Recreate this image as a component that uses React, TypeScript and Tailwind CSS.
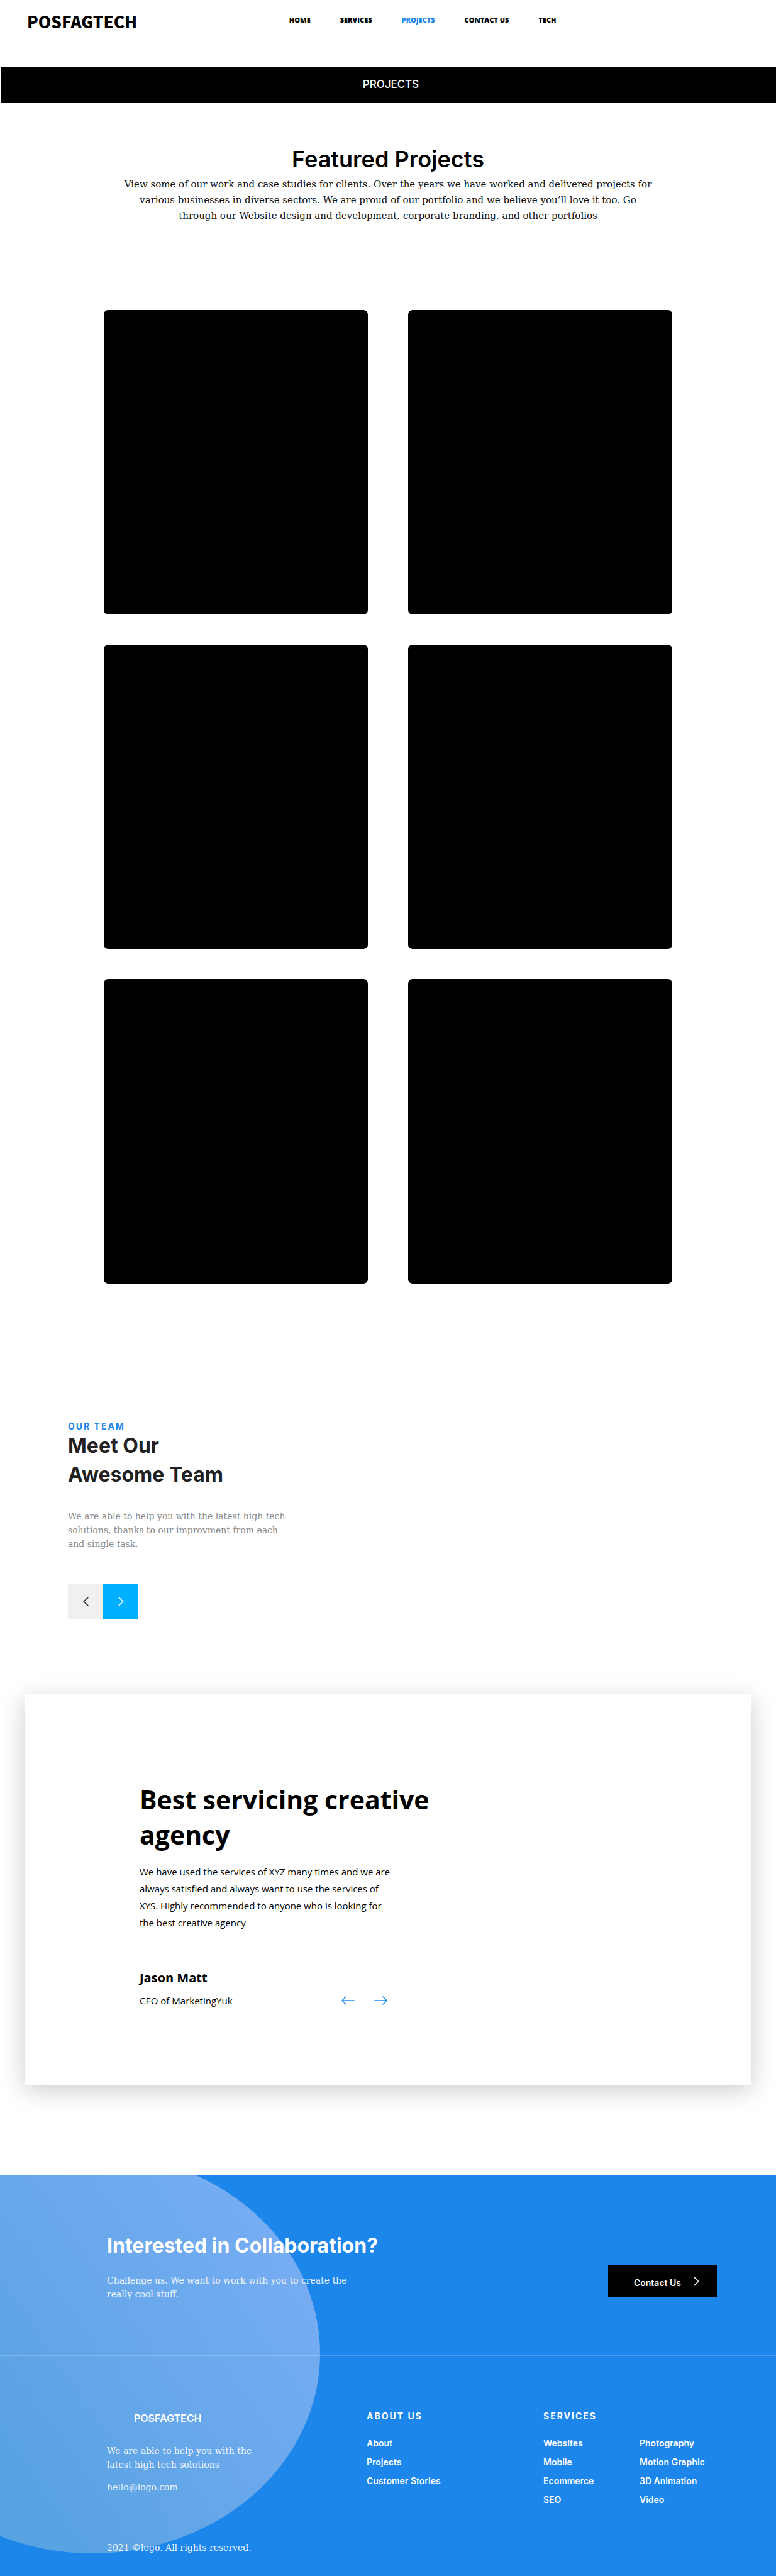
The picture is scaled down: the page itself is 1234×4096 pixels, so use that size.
import React from "react";

const serif = "font-['DejaVu_Serif','Liberation_Serif',serif]";
const sans = "font-['Open_Sans',sans-serif]";

const navItems = [
  { label: "HOME" },
  { label: "SERVICES" },
  { label: "PROJECTS", active: true },
  { label: "CONTACT US" },
  { label: "TECH" },
];

const projects = [1, 2, 3, 4, 5, 6];

function Chevron({ direction }: { direction: "left" | "right" }) {
  return (
    <svg width="9" height="15" viewBox="0 0 9 15" fill="none" stroke="currentColor" strokeWidth="1.6" strokeLinecap="round" aria-hidden="true">
      <path d={direction === "left" ? "M8 1 1.4 7.5 8 14" : "M1 1 7.6 7.5 1 14"} />
    </svg>
  );
}

function Arrow({ direction }: { direction: "left" | "right" }) {
  return (
    <svg width="21" height="14" viewBox="0 0 21 14" fill="none" stroke="currentColor" strokeWidth="1.6" strokeLinecap="round" strokeLinejoin="round" aria-hidden="true">
      <path d={direction === "left" ? "M20 7H1M7 1 1 7l6 6" : "M1 7h19M14 1l6 6-6 6"} />
    </svg>
  );
}

function Header() {
  return (
    <header className={"flex h-[106px] items-start pl-[43px] " + sans}>
      <a href="#" className="mt-4 w-[35%] font-['Noto_Sans_CJK_JP',sans-serif] text-[26px] leading-9 font-black">
        POSFAGTECH
      </a>
      <nav className="mt-6 flex gap-[47px]" aria-label="Main">
        {navItems.map((item) => (
          <a
            key={item.label}
            href="#"
            aria-current={item.active ? "page" : undefined}
            className={"text-[11px] leading-4 font-extrabold whitespace-nowrap " + (item.active ? "text-[#1c86ea]" : "text-black")}
          >
            {item.label}
          </a>
        ))}
      </nav>
    </header>
  );
}

function Featured() {
  return (
    <section className="pt-[65px]">
      <h2 className="text-center text-[36px] leading-[48px] font-semibold">Featured Projects</h2>
      <p className={"mt-1 text-center text-[15px] leading-[25px] text-[#111111] " + serif}>
        View some of our work and case studies for clients. Over the years we have worked and delivered projects for
        <br />
        various businesses in diverse sectors. We are proud of our portfolio and we believe you’ll love it too. Go
        <br />
        through our Website design and development, corporate branding, and other portfolios
      </p>
      <ul className="mx-auto mt-[137px] grid max-w-[904px] grid-cols-2 gap-x-16 gap-y-12">
        {projects.map((project) => (
          <li key={project} className="h-[484px] rounded-[7px] bg-black" />
        ))}
      </ul>
    </section>
  );
}

function Team() {
  return (
    <section className="mt-[219px] px-[108px]">
      <p className="text-[14px] leading-4 font-bold tracking-[2px] text-[#1c86ea]">OUR TEAM</p>
      <h2 className="text-[32px] leading-[46px] font-bold text-[#212121]">
        Meet Our
        <br />
        Awesome Team
      </h2>
      <p className={"mt-8 text-[14px] leading-[22px] text-[#8a8a8a] " + serif}>
        We are able to help you with the latest high tech
        <br />
        solutions, thanks to our improvment from each
        <br />
        and single task.
      </p>
      <div className="mt-[52px] flex">
        <button type="button" aria-label="Previous member" className="flex size-14 items-center justify-center bg-[#f0f0f0] text-[#212121]">
          <Chevron direction="left" />
        </button>
        <button type="button" aria-label="Next member" className="flex size-14 items-center justify-center bg-[#00b0ff] text-white">
          <Chevron direction="right" />
        </button>
      </div>
    </section>
  );
}

function Testimonial() {
  return (
    <section className={"mx-[39px] mt-[120px] bg-white pt-[139px] pb-[123px] pl-[183px] shadow-[0_8px_36px_rgba(0,0,0,0.2)] " + sans}>
      <h2 className="text-[41px] leading-[56px] font-bold">
        Best servicing creative
        <br />
        agency
      </h2>
      <p className="mt-[18px] text-[15px] leading-[27px]">
        We have used the services of XYZ many times and we are
        <br />
        always satisfied and always want to use the services of
        <br />
        XYS. Highly recommended to anyone who is looking for
        <br />
        the best creative agency
      </p>
      <p className="mt-[60px] text-[20px] leading-7 font-bold">Jason Matt</p>
      <div className="mt-[10px] flex max-w-[394px] items-center justify-between">
        <p className="text-[15px] leading-6">CEO of MarketingYuk</p>
        <div className="flex gap-[31px] text-[#1c86ea]">
          <button type="button" aria-label="Previous review">
            <Arrow direction="left" />
          </button>
          <button type="button" aria-label="Next review">
            <Arrow direction="right" />
          </button>
        </div>
      </div>
    </section>
  );
}

function LinkList({ items }: { items: string[] }) {
  return (
    <ul className="mt-[23px] flex flex-col gap-[10px]">
      {items.map((item) => (
        <li key={item} className="text-[14px] leading-5 font-semibold whitespace-nowrap">
          <a href="#">{item}</a>
        </li>
      ))}
    </ul>
  );
}

function Footer() {
  return (
    <footer className="relative mt-[142px] overflow-hidden bg-[#1c86ea] text-white">
      <div className="absolute -top-[34px] -left-[215px] h-[636px] w-[724px] rounded-[50%] bg-[linear-gradient(55deg,#5aa3e3_30%,#78adf3_90%)]" />
      <div className="relative">
        <div className="flex items-start justify-between border-b border-white/20 pt-[93px] pr-[94px] pb-[86px] pl-[170px]">
          <div>
            <h2 className="text-[32px] leading-10 font-bold">Interested in Collaboration?</h2>
            <p className={"mt-6 text-[14px] leading-[22px] text-white/90 " + serif}>
              Challenge us. We want to work with you to create the
              <br />
              really cool stuff.
            </p>
          </div>
          <button type="button" className="mt-[51px] flex h-[51px] w-[173px] items-center justify-end gap-5 bg-black pr-7 text-[14px] font-semibold">
            <span className="pt-1">Contact Us</span>
            <Chevron direction="right" />
          </button>
        </div>
        <div className="grid grid-cols-[413fr_281fr_153fr_217fr] pt-[86px] pb-[34px] pl-[170px]">
          <div>
            <p className="mt-[3px] pl-[43px] text-[16px] leading-5 font-semibold">POSFAGTECH</p>
            <div className={"text-[14px] leading-[22px] text-white/90 " + serif}>
              <p className="mt-[31px]">
                We are able to help you with the
                <br />
                latest high tech solutions
              </p>
              <a href="#" className="mt-[14px] block">
                hello@logo.com
              </a>
              <p className="mt-[74px]">2021 ©logo. All rights reserved.</p>
            </div>
          </div>
          <div>
            <h3 className="text-[14px] leading-5 font-bold tracking-[2px]">ABOUT US</h3>
            <LinkList items={["About", "Projects", "Customer Stories"]} />
          </div>
          <div>
            <h3 className="text-[14px] leading-5 font-bold tracking-[2px]">SERVICES</h3>
            <LinkList items={["Websites", "Mobile", "Ecommerce", "SEO"]} />
          </div>
          <div className="pt-5">
            <LinkList items={["Photography", "Motion Graphic", "3D Animation", "Video"]} />
          </div>
        </div>
      </div>
    </footer>
  );
}

export default function App() {
  return (
    <div className="bg-white font-['Inter',sans-serif] text-black">
      <Header />
      <main>
        <h1 className="ml-px flex h-[58px] items-center justify-center bg-black pl-2 text-[17px] font-medium text-white">PROJECTS</h1>
        <Featured />
        <Team />
        <Testimonial />
      </main>
      <Footer />
    </div>
  );
}
